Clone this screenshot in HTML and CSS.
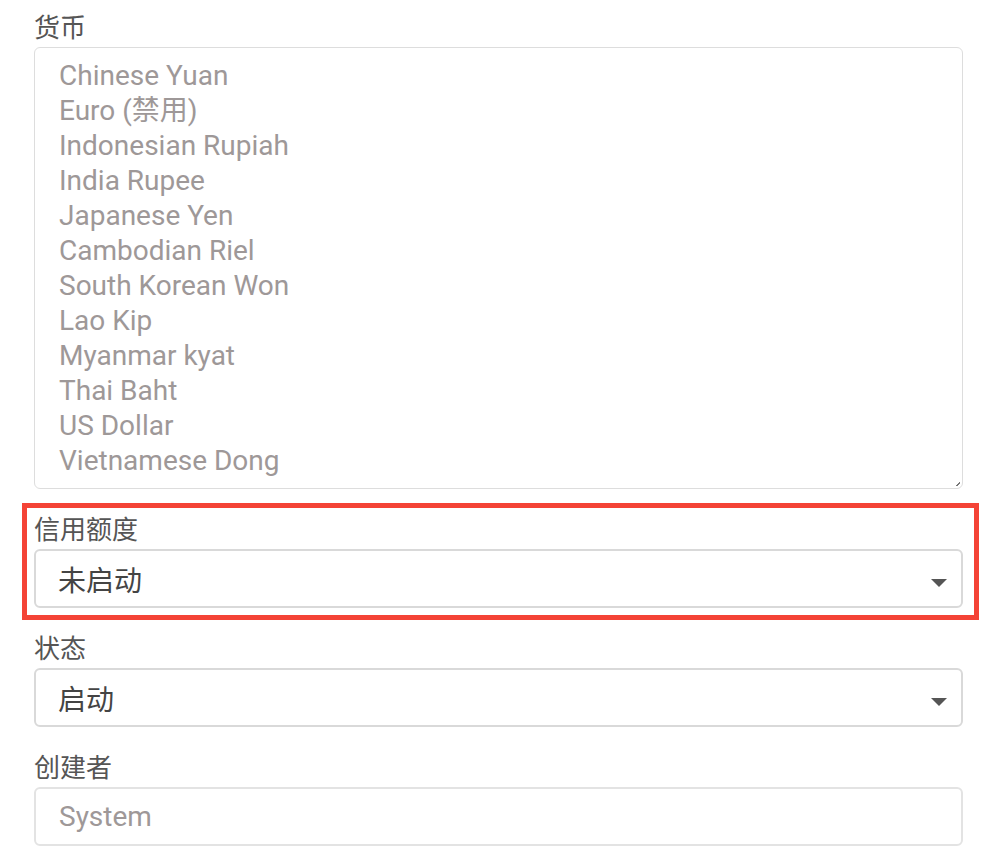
FILE: index.html
```html
<!DOCTYPE html>
<html lang="zh-CN">
<head>
<meta charset="utf-8"/>
<meta content="width=device-width, initial-scale=1.0" name="viewport"/>
<title>货币设置</title>
<link rel="stylesheet" href="styles.css">
</head>
<body>
<form class="form">
<div class="field">
<label>货币</label>
<div class="listbox">
<div class="option">Chinese Yuan</div>
<div class="option">Euro (禁用)</div>
<div class="option">Indonesian Rupiah</div>
<div class="option">India Rupee</div>
<div class="option">Japanese Yen</div>
<div class="option">Cambodian Riel</div>
<div class="option">South Korean Won</div>
<div class="option">Lao Kip</div>
<div class="option">Myanmar kyat</div>
<div class="option">Thai Baht</div>
<div class="option">US Dollar</div>
<div class="option">Vietnamese Dong</div>
<span class="grip"></span>
</div>
</div>
<div class="field highlight">
<label>信用额度</label>
<div class="select">未启动<span class="caret"></span></div>
</div>
<div class="field">
<label>状态</label>
<div class="select">启动<span class="caret"></span></div>
</div>
<div class="field">
<label>创建者</label>
<div class="input">System</div>
</div>
</form>
</body>
</html>
```
FILE: styles.css
```css
body {
  font-family: Roboto, "Noto Sans CJK SC", sans-serif;
  background: #fff;
  margin: 0;
  padding: 11px 27px 0 34px;
}
.form {
  display: flex;
  flex-direction: column;
  gap: 24px;
}
.field {
  display: flex;
  flex-direction: column;
  position: relative;
}
.field label {
  font-size: 26px;
  line-height: 34px;
  margin-bottom: 2px;
  color: #555;
}
.listbox {
  position: relative;
  border: 1px solid #ddd;
  border-radius: 6px;
  padding: 10px 24px 10px;
}
.option {
  font-size: 28px;
  line-height: 35px;
  height: 35px;
  color: #9e9898;
  white-space: nowrap;
}
.grip {
  position: absolute;
  right: 2px;
  bottom: 2px;
  width: 5px;
  height: 5px;
  background: linear-gradient(135deg, transparent 55%, #777 55%, #777 75%, transparent 75%);
}
.select,
.input {
  display: flex;
  align-items: center;
  height: 59px;
  box-sizing: border-box;
  border: 2px solid #d9d9d9;
  border-radius: 6px;
  padding: 0 22px;
  font-size: 28px;
  color: #444;
}
.input {
  border-color: #e3e3e3;
  color: #9e9898;
  padding-left: 23px;
}
.caret {
  margin-left: auto;
  margin-right: -8px;
  margin-top: 9px;
  width: 0;
  height: 0;
  border-left: 8px solid transparent;
  border-right: 8px solid transparent;
  border-top: 8px solid #555;
}
.highlight::after {
  content: "";
  position: absolute;
  top: -10px;
  left: -12px;
  right: -16px;
  bottom: -12px;
  border: 5px solid #f44336;
  pointer-events: none;
}
```
